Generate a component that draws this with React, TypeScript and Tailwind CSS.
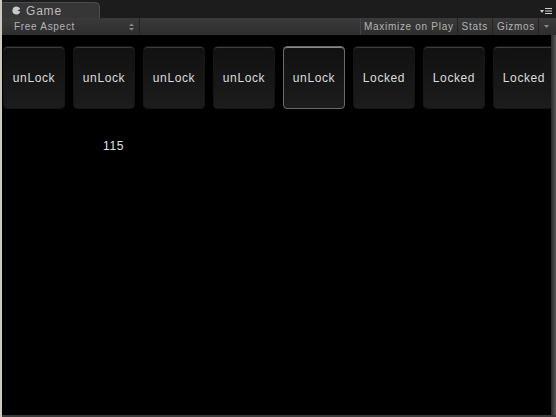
import React from "react";

const labels = ["unLock", "unLock", "unLock", "unLock", "unLock", "Locked", "Locked", "Locked"];

export default function App() {
  return (
    <div
      className="w-[556px] h-[417px] flex bg-black overflow-hidden"
      style={{ fontFamily: '"Liberation Sans", Arial, sans-serif' }}
    >
      <div className="w-[2px] h-full bg-[#cdc9bf]" />
      <div className="flex-1 flex flex-col min-w-0">
        {/* tab bar */}
        <div className="h-[18px] bg-[#1c1c1c] flex items-end relative">
          <div className="w-[98px] h-[16px] bg-[#363636] rounded-tr-[5px] border-t border-r border-[#4a4a4a] flex items-center pl-[10px] gap-[5px]">
            <svg width="9" height="9" viewBox="0 0 9 9">
              <path d="M4.5 0.5 A4 4 0 1 0 8.3 5.5 L5.5 4.5 L8.3 3 A4 4 0 0 0 4.5 0.5 Z" fill="#c8c8c8" />
            </svg>
            <span className="text-[12px] text-[#bdbdbd] tracking-[0.8px] leading-none">Game</span>
          </div>
          <div className="absolute right-[4px] top-[8px] flex items-center gap-[1px]">
            <svg width="4" height="3" viewBox="0 0 4 3">
              <path d="M0 0 H4 L2 3 Z" fill="#cfcfcf" />
            </svg>
            <svg width="7" height="6" viewBox="0 0 7 6">
              <rect x="0" y="0" width="7" height="1" fill="#cfcfcf" />
              <rect x="0" y="2.5" width="7" height="1" fill="#cfcfcf" />
              <rect x="0" y="5" width="7" height="1" fill="#cfcfcf" />
            </svg>
          </div>
        </div>
        {/* toolbar */}
        <div className="h-[17px] bg-gradient-to-b from-[#3a3a3a] to-[#2e2e2e] flex items-stretch text-[10px] text-[#b4b4b4] tracking-[0.7px] leading-none">
          <div className="w-[138px] flex items-center justify-between pl-[12px] pr-[5px] border-r border-[#232323]">
            <span>Free Aspect</span>
            <svg width="5" height="8" viewBox="0 0 5 8">
              <path d="M0 3 L2.5 0.5 L5 3 Z M0 5 L2.5 7.5 L5 5 Z" fill="#8a8a8a" />
            </svg>
          </div>
          <div className="flex-1 border-r border-[#444]" />
          <div className="flex items-center px-[3px] border-r border-[#232323]">Maximize on Play</div>
          <div className="flex items-center px-[4px] border-r border-[#232323]">Stats</div>
          <div className="flex items-center pl-[4px] pr-[3px] border-r border-[#232323]">Gizmos</div>
          <div className="w-[14px] flex items-center justify-center mr-[3px]">
            <svg width="5" height="3" viewBox="0 0 5 3">
              <path d="M0 0 H5 L2.5 3 Z" fill="#8a8a8a" />
            </svg>
          </div>
        </div>
        {/* game view */}
        <div className="flex-1 flex min-h-0">
          <div className="flex-1 min-w-0 bg-black overflow-hidden relative">
            <div className="flex gap-[8px] pl-[1px] pt-[11px] w-[600px]">
              {labels.map((l, i) => (
                <div
                  key={i}
                  className={
                    "w-[62px] h-[63px] shrink-0 rounded-[4px] flex items-center justify-center bg-gradient-to-b from-[#111] to-[#1c1c1c] " +
                    (i === 4
                      ? "border border-[#6a6a6a] shadow-[inset_0_1px_0_#888]"
                      : "border border-[#151515] shadow-[inset_0_1px_0_#3c3c3c]")
                  }
                >
                  <span className="text-[12px] text-[#dcdcdc] tracking-[0.6px]">{l}</span>
                </div>
              ))}
            </div>
            <div className="ml-[101px] mt-[31px] text-[12px] text-[#e0e0e0] tracking-[0.6px] leading-none">115</div>
          </div>
          <div className="w-[5px] h-full bg-gradient-to-r from-[#2a2a2a] to-[#5a5a5a]" />
        </div>
        <div className="h-[2px] bg-[#3a3a3a]" />
      </div>
    </div>
  );
}
